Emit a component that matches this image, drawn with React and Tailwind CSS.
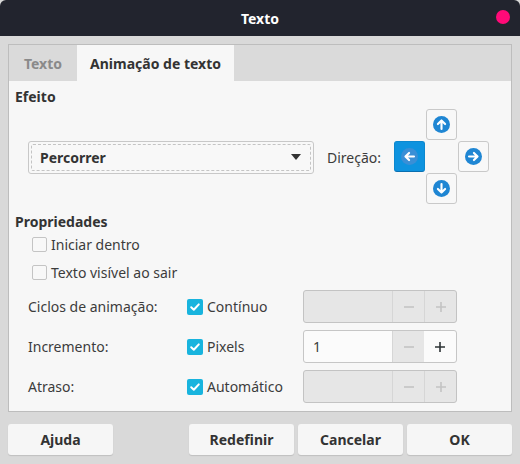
const font = { fontFamily: '"Noto Sans", "Open Sans", sans-serif' }

function Arrow({ dir, active }) {
  const rot = { up: 0, right: 90, down: 180, left: 270 }[dir]
  return (
    <svg width="17" height="17" viewBox="0 0 16 16">
      <circle cx="8" cy="8" r="8" fill={active ? '#3a8fd6' : '#1f86d3'} />
      <g transform={`rotate(${rot} 8 8)`}>
        <path d="M8 12.2V4.3M4.6 7.6L8 4.2l3.4 3.4" fill="none" stroke="#fff" strokeWidth="2" strokeLinecap="round" strokeLinejoin="round" />
      </g>
    </svg>
  )
}

function DirButton({ dir, active, className = '' }) {
  return (
    <div
      className={
        'w-[31px] h-[31px] rounded-[3px] flex items-center justify-center ' +
        (active ? 'bg-[#0e93df] border border-[#0c88cf] border-b-[#0a6fb0]' : 'bg-[#f8f8f8] border border-[#c9c9c9]') +
        ' ' + className
      }
    >
      <Arrow dir={dir} active={active} />
    </div>
  )
}

function Check({ checked }) {
  return checked ? (
    <div className="w-[16px] h-[16px] rounded-[2px] bg-[#18b4de] flex items-center justify-center">
      <svg width="12" height="12" viewBox="0 0 12 12">
        <path d="M2.2 6.2l2.6 2.6 5-5.4" fill="none" stroke="#fff" strokeWidth="2" strokeLinecap="round" strokeLinejoin="round" />
      </svg>
    </div>
  ) : (
    <div className="w-[15px] h-[15px] rounded-[2px] border border-[#c4c4c4] bg-[#f8f8f8]" />
  )
}

function SpinBox({ value, disabled }) {
  return (
    <div
      className={
        'w-[154px] h-[33px] rounded-[3px] border flex ' +
        (disabled ? 'bg-[#e6e6e6] border-[#c3c3c3]' : 'bg-[#fbfbfb] border-[#c6c6c6]')
      }
    >
      <div className="flex-1 flex items-center pl-[9px] text-[14px] text-[#3c3c3c]">{value}</div>
      <div className="w-[32px] flex items-center justify-center border-l border-[#d6d6d6] bg-[#e6e6e6] text-[#c4c4c4]">
        <svg width="12" height="12" viewBox="0 0 12 12"><path d="M1 6h10" stroke="currentColor" strokeWidth="1.6" /></svg>
      </div>
      <div
        className={
          'w-[32px] flex items-center justify-center ' +
          (disabled ? 'border-l border-[#d6d6d6] text-[#c4c4c4]' : 'text-[#2e3436]')
        }
      >
        <svg width="12" height="12" viewBox="0 0 12 12"><path d="M1 6h10M6 1v10" stroke="currentColor" strokeWidth="1.6" /></svg>
      </div>
    </div>
  )
}

function Row({ label, check, spin }) {
  return (
    <div className="flex items-center h-[33px]">
      <div className="w-[159px] text-[14px] text-[#3c3c3c]">{label}</div>
      <div className="flex items-center w-[116px]">
        <Check checked />
        <span className="ml-[4px] text-[14px] text-[#3c3c3c]">{check}</span>
      </div>
      {spin}
    </div>
  )
}

function Button({ children, className = '' }) {
  return (
    <div
      className={
        'h-[31px] w-[105px] rounded-[3px] bg-[#f6f6f6] shadow-[0_1px_1px_rgba(0,0,0,0.12)] flex items-center justify-center text-[14px] font-bold text-[#333] ' +
        className
      }
    >
      {children}
    </div>
  )
}

export default function App() {
  return (
    <div style={font} className="w-[520px] h-[464px] bg-[#d9d9d9] flex flex-col overflow-hidden">
      {/* barra de título */}
      <div className="h-[36px] bg-[#22242e] rounded-t-[6px] flex items-center relative">
        <div className="flex-1 text-center text-white text-[14px] font-bold">Texto</div>
        <div className="absolute right-[10px] top-[10px] w-[14px] h-[14px] rounded-full bg-[#ff0a78]" />
      </div>

      {/* notebook */}
      <div className="mx-[8px] mt-[8px] h-[368px] border border-[#bdbdbd] flex flex-col">
        <div className="h-[36px] flex bg-[#dadada]">
          <div className="w-[68px] flex items-center justify-center text-[14px] font-bold text-[#8a8a8a]">Texto</div>
          <div className="w-[157px] bg-[#f7f7f7] flex items-center justify-center text-[14px] font-bold text-[#333]">
            Animação de texto
          </div>
        </div>

        <div className="flex-1 bg-[#f7f7f7] pl-[6px] pt-[6px] text-[#3c3c3c]">
          <div className="text-[14px] font-bold text-[#333] leading-[20px]">Efeito</div>

          <div className="flex items-center mt-[2px]">
            <div className="ml-[13px] w-[286px] h-[33px] rounded-[3px] border border-[#c8c8c8] bg-[#f8f8f8] p-[2px]">
              <div className="h-full border border-dashed border-[#c4c4c4] rounded-[2px] flex items-center pl-[8px] pr-[9px]">
                <span className="flex-1 text-[14px] font-bold text-[#333]">Percorrer</span>
                <svg width="10" height="6" viewBox="0 0 10 6"><path d="M0 0h10L5 6z" fill="#333" /></svg>
              </div>
            </div>
            <span className="ml-[13px] text-[14px] text-[#3c3c3c]">Direção:</span>
            <div className="ml-[13px] grid grid-cols-[32px_32px_32px] grid-rows-[32px_32px_32px]">
              <div />
              <DirButton dir="up" />
              <div />
              <DirButton dir="left" active />
              <div />
              <DirButton dir="right" />
              <div />
              <DirButton dir="down" />
              <div />
            </div>
          </div>

          <div className="mt-[7px] text-[14px] font-bold text-[#333] leading-[20px]">Propriedades</div>

          <div className="ml-[17px] mt-[3px] flex items-center h-[18px]">
            <Check />
            <span className="ml-[4px] text-[14px]">Iniciar dentro</span>
          </div>
          <div className="ml-[17px] mt-[10px] flex items-center h-[18px]">
            <Check />
            <span className="ml-[4px] text-[14px]">Texto visível ao sair</span>
          </div>

          <div className="ml-[13px] mt-[9px] flex flex-col gap-[7px]">
            <Row label="Ciclos de animação:" check="Contínuo" spin={<SpinBox disabled />} />
            <Row label="Incremento:" check="Pixels" spin={<SpinBox value="1" />} />
            <Row label="Atraso:" check="Automático" spin={<SpinBox disabled />} />
          </div>
        </div>
      </div>

      {/* botões */}
      <div className="mt-[12px] mx-[8px] flex">
        <Button>Ajuda</Button>
        <div className="flex-1" />
        <div className="flex gap-[4px]">
          <Button>Redefinir</Button>
          <Button>Cancelar</Button>
          <Button>OK</Button>
        </div>
      </div>
    </div>
  )
}
